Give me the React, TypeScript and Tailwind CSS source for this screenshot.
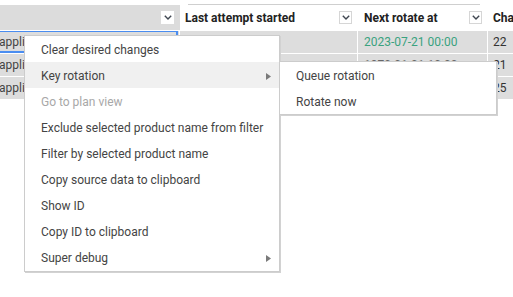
import React from 'react';

const Chevron: React.FC<{ onGray?: boolean }> = ({ onGray }) => (
  <span
    className={`flex h-[13px] w-[13px] items-center justify-center bg-white ${onGray ? '' : 'border border-[#d6d6d6]'}`}
  >
    <svg width="8" height="5" viewBox="0 0 8 5">
      <path d="M0.8 0.8 L4 4 L7.2 0.8" fill="none" stroke="#3f4650" strokeWidth="1.4" />
    </svg>
  </span>
);

const Arrow: React.FC = () => (
  <svg width="5" height="7" viewBox="0 0 5 7" className="ml-auto mr-[8px]">
    <polygon points="0,0 5,3.5 0,7" fill="#7a7a7a" />
  </svg>
);

const menuItems: { label: string; disabled?: boolean; sub?: boolean; active?: boolean }[] = [
  { label: 'Clear desired changes' },
  { label: 'Key rotation', sub: true, active: true },
  { label: 'Go to plan view', disabled: true },
  { label: 'Exclude selected product name from filter' },
  { label: 'Filter by selected product name' },
  { label: 'Copy source data to clipboard' },
  { label: 'Show ID' },
  { label: 'Copy ID to clipboard' },
  { label: 'Super debug', sub: true },
];

const rows = [
  { next: '2023-07-21 00:00', nextColor: 'text-[#3aa27f]', count: '22' },
  { next: '1970-01-01 10:00', nextColor: 'text-[#666]', count: '21' },
  { next: '', nextColor: '', count: '25' },
];

const App: React.FC = () => {
  return (
    <div className="relative h-[297px] w-[513px] overflow-hidden bg-white font-['Roboto',sans-serif] text-[12px] text-[#333]">
      <div className="h-[4px]" />
      <div className="ml-[188px] h-px w-[292px] bg-[#cfcfcf]" />

      {/* grid */}
      <div className="grid grid-cols-[180px_178px_130px_1fr] gap-y-px bg-white">
        {/* header */}
        <div className="flex h-[25px] items-center justify-end bg-[#dcdcdc] pr-[6px]">
          <Chevron onGray />
        </div>
        <div className="flex h-[25px] items-center pl-[5px] pr-[6px] font-bold text-[#222]">
          <span>Last attempt started</span>
          <span className="ml-auto">
            <Chevron />
          </span>
        </div>
        <div className="flex h-[25px] items-center pl-[6px] pr-[6px] font-bold text-[#222]">
          <span>Next rotate at</span>
          <span className="ml-auto">
            <Chevron />
          </span>
        </div>
        <div className="flex h-[25px] items-center whitespace-nowrap pl-[5px] font-bold text-[#222]">Changes</div>

        {/* body */}
        {rows.map((r, i) => (
          <React.Fragment key={i}>
            <div className="relative flex h-[22px] items-center overflow-hidden border-r border-white bg-[#dddddd]">
              <span className="-ml-px whitespace-nowrap text-[#444]">application</span>
              {i === 0 && <span className="absolute -top-px right-px bottom-0 left-0 border-y-2 border-r-2 border-[#4a8df0]" />}
            </div>
            <div className="h-[22px] border-r border-white bg-[#dddddd]" />
            <div className={`flex h-[22px] items-center border-r border-white bg-[#dddddd] pl-[6px] ${r.nextColor}`}>
              {r.next}
            </div>
            <div className="flex h-[22px] items-center bg-[#dddddd] pl-[5px] text-[#333]">{r.count}</div>
          </React.Fragment>
        ))}
      </div>

      {/* context menu */}
      <div className="absolute left-[24px] top-[35px] w-[256px] border border-[#cccccc] bg-white pb-px shadow-[1px_1px_0_#d2d2d2]">
        {menuItems.map((m) => (
          <div
            key={m.label}
            className={`flex h-[26px] items-center pl-[16px] pt-[2px] ${m.active ? 'bg-[#f0f0f0]' : ''} ${m.disabled ? 'text-[#a8a8a8]' : 'text-[#444]'}`}
          >
            <span className="whitespace-nowrap">{m.label}</span>
            {m.sub && <Arrow />}
          </div>
        ))}
      </div>

      {/* submenu */}
      <div className="absolute left-[279px] top-[61px] w-[218px] border border-[#cccccc] bg-white shadow-[1px_1px_0_#d2d2d2]">
        <div className="flex h-[26px] items-center pl-[16px] pt-[2px] text-[#444]">Queue rotation</div>
        <div className="flex h-[26px] items-center pl-[16px] pt-[2px] text-[#444]">Rotate now</div>
      </div>
    </div>
  );
};

export default App;
